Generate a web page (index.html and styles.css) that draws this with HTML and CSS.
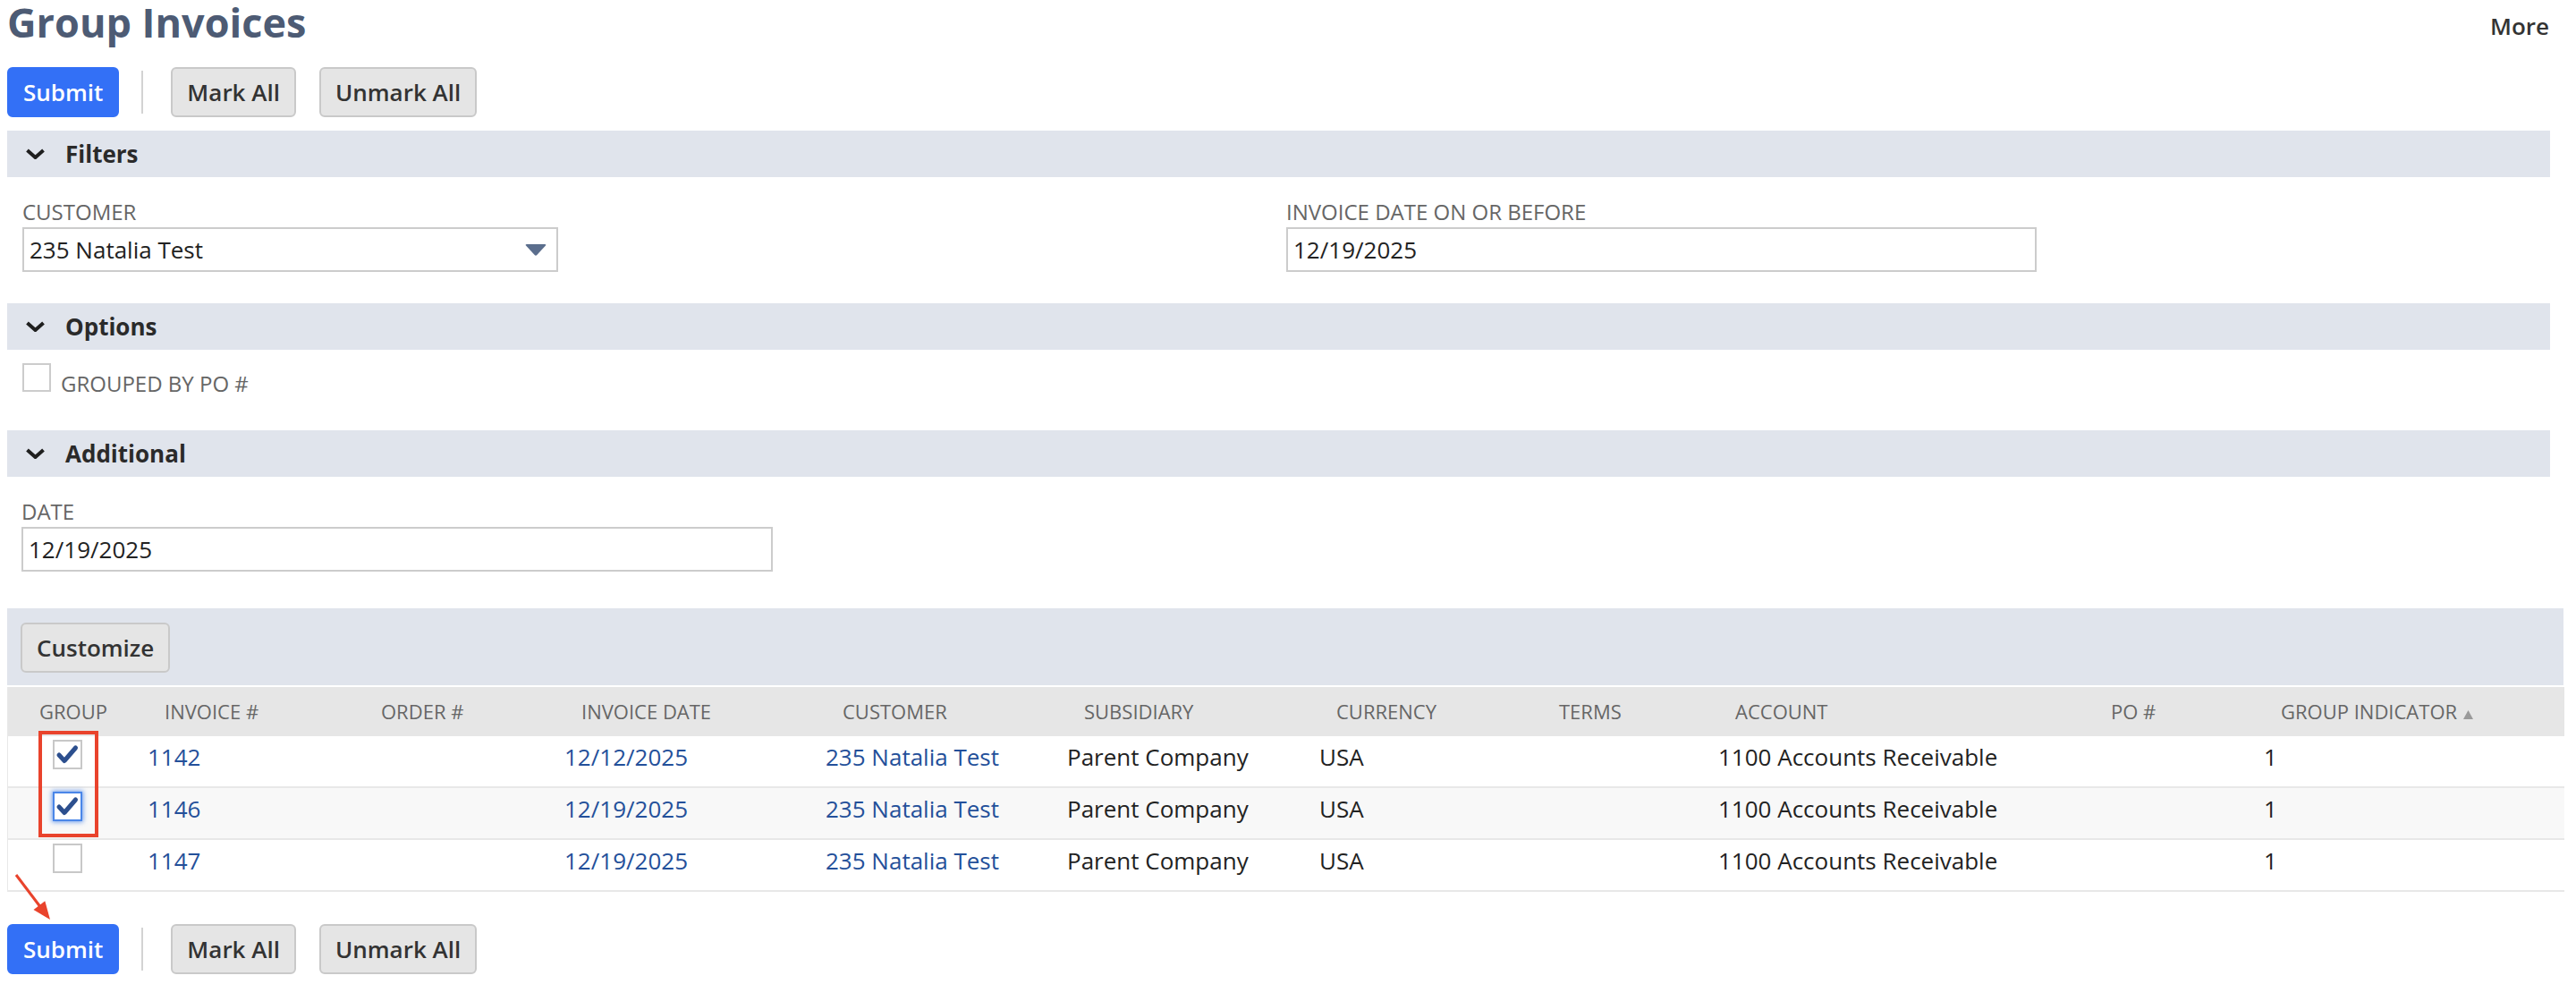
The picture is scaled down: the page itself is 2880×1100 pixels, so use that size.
FILE: index.html
```html
<!DOCTYPE html>
<html lang="en">
<head>
  <meta charset="UTF-8" />
  <meta name="viewport" content="width=device-width, initial-scale=1.0"/>
  <title>Group Invoices</title>
  <link rel="stylesheet" href="styles.css">
</head>
<body>
<div class="page">
  <header class="page-head">
    <h1 class="page-title">Group Invoices</h1>
    <a class="more">More</a>
  </header>

  <div class="btn-bar btn-bar-top">
    <button class="btn btn-primary">Submit</button>
    <span class="btn-sep"></span>
    <button class="btn">Mark All</button>
    <button class="btn">Unmark All</button>
  </div>

  <section class="fgroup">
    <div class="fgroup-head">
      <svg class="chev" width="23" height="12" viewBox="0 0 23 12"><path d="M2.5 2 L11.5 10 L20.5 2" fill="none" stroke="#1f1f1f" stroke-width="4"/></svg>
      Filters
    </div>
    <div class="fgroup-body cols-2">
      <div class="field">
        <label>Customer</label>
        <div class="input select">
          <span>235 Natalia Test</span>
          <svg width="24" height="13" viewBox="0 0 24 13"><path d="M2 0 H22 Q24 0 23 1.5 L13.3 12 Q12 13.3 10.7 12 L1 1.5 Q0 0 2 0 Z" fill="#5b6e8d"/></svg>
        </div>
      </div>
      <div class="field">
        <label>Invoice Date On or Before</label>
        <div class="input date-wide">12/19/2025</div>
      </div>
    </div>
  </section>

  <section class="fgroup">
    <div class="fgroup-head">
      <svg class="chev" width="23" height="12" viewBox="0 0 23 12"><path d="M2.5 2 L11.5 10 L20.5 2" fill="none" stroke="#1f1f1f" stroke-width="4"/></svg>
      Options
    </div>
    <div class="fgroup-body opts">
      <div class="check-row">
        <span class="cbox"></span>
        <span class="check-label">Grouped by PO #</span>
      </div>
    </div>
  </section>

  <section class="fgroup">
    <div class="fgroup-head">
      <svg class="chev" width="23" height="12" viewBox="0 0 23 12"><path d="M2.5 2 L11.5 10 L20.5 2" fill="none" stroke="#1f1f1f" stroke-width="4"/></svg>
      Additional
    </div>
    <div class="fgroup-body addl">
      <div class="field">
        <label>Date</label>
        <div class="input date-mid">12/19/2025</div>
      </div>
    </div>
  </section>

  <section class="list">
    <div class="list-bar">
      <button class="btn">Customize</button>
    </div>
    <div class="table-wrap">
      <table class="grid">
        <colgroup>
          <col style="width:144px"><col style="width:242px"><col style="width:224px"><col style="width:292px">
          <col style="width:270px"><col style="width:282px"><col style="width:249px"><col style="width:197px">
          <col style="width:420px"><col style="width:190px"><col style="width:348px">
        </colgroup>
        <thead>
          <tr>
            <th class="c-group">Group</th>
            <th>Invoice #</th>
            <th>Order #</th>
            <th>Invoice Date</th>
            <th>Customer</th>
            <th>Subsidiary</th>
            <th>Currency</th>
            <th>Terms</th>
            <th>Account</th>
            <th>PO #</th>
            <th>Group Indicator<svg class="sort" width="11" height="10" viewBox="0 0 11 10"><path d="M5.5 0 L11 10 H0 Z" fill="#9a9a9a"/></svg></th>
          </tr>
        </thead>
        <tbody>
          <tr>
            <td class="c-group"><span class="cbox cbox-lg"><svg width="29" height="29" viewBox="0 0 29 29"><path d="M5 15 L11 21.5 L23.5 7" fill="none" stroke="#2c4f8e" stroke-width="5" stroke-linejoin="round" stroke-linecap="round"/></svg></span></td>
            <td><a>1142</a></td>
            <td></td>
            <td><a>12/12/2025</a></td>
            <td><a>235 Natalia Test</a></td>
            <td>Parent Company</td>
            <td>USA</td>
            <td></td>
            <td>1100 Accounts Receivable</td>
            <td></td>
            <td>1</td>
          </tr>
          <tr class="alt">
            <td class="c-group"><span class="cbox cbox-lg focus"><svg width="29" height="29" viewBox="0 0 29 29"><path d="M5 15 L11 21.5 L23.5 7" fill="none" stroke="#2c4f8e" stroke-width="5" stroke-linejoin="round" stroke-linecap="round"/></svg></span></td>
            <td><a>1146</a></td>
            <td></td>
            <td><a>12/19/2025</a></td>
            <td><a>235 Natalia Test</a></td>
            <td>Parent Company</td>
            <td>USA</td>
            <td></td>
            <td>1100 Accounts Receivable</td>
            <td></td>
            <td>1</td>
          </tr>
          <tr>
            <td class="c-group"><span class="cbox cbox-lg"></span></td>
            <td><a>1147</a></td>
            <td></td>
            <td><a>12/19/2025</a></td>
            <td><a>235 Natalia Test</a></td>
            <td>Parent Company</td>
            <td>USA</td>
            <td></td>
            <td>1100 Accounts Receivable</td>
            <td></td>
            <td>1</td>
          </tr>
        </tbody>
      </table>
      <div class="mark-box"></div>
    </div>
  </section>

  <div class="btn-bar btn-bar-bottom">
    <svg class="pointer" width="60" height="60" viewBox="0 0 60 60">
      <line x1="10" y1="5" x2="38" y2="42" stroke="#e9432c" stroke-width="3"/>
      <path d="M48 55 L42.3 34.3 L29.5 43.9 Z" fill="#e9432c"/>
    </svg>
    <button class="btn btn-primary">Submit</button>
    <span class="btn-sep"></span>
    <button class="btn">Mark All</button>
    <button class="btn">Unmark All</button>
  </div>
</div>
</body>
</html>
```

FILE: styles.css
```css
body {
  margin: 0;
  background: #fff;
  color: #222;
  font-family: "Open Sans", sans-serif;
  font-size: 26px;
}

.page {
  padding: 0 14px 0 8px;
}

a {
  color: #24509a;
  text-decoration: none;
}

.page-head {
  display: flex;
  justify-content: space-between;
  align-items: flex-start;
  height: 50px;
}

.page-title {
  margin: 0;
  font-size: 45px;
  line-height: 50px;
  font-weight: 700;
  color: #4d5b74;
}

.more {
  color: #333;
  font-weight: 600;
  line-height: 36px;
  padding-top: 11px;
  margin-right: 16px;
}

/* buttons */

.btn-bar {
  display: flex;
  align-items: center;
  height: 56px;
}

.btn-bar-top {
  margin: 25px 0 15px;
}

.btn {
  box-sizing: border-box;
  height: 56px;
  padding: 0 16px;
  border: 2px solid #c9c9c9;
  border-radius: 6px;
  background: #e5e5e5;
  color: #333;
  font-family: "Open Sans", sans-serif;
  font-size: 26px;
  font-weight: 600;
  line-height: 52px;
}

.btn-primary {
  background: #3370f6;
  border-color: #3370f6;
  color: #fff;
}

.btn + .btn {
  margin-left: 26px;
}

.btn-sep {
  width: 2px;
  height: 48px;
  background: #d3d3d3;
  margin: 0 31px 0 25px;
}

.btn-bar-bottom {
  position: relative;
  margin-top: 36px;
}

.pointer {
  position: absolute;
  left: 0;
  top: -60px;
}

/* field groups */

.fgroup {
  margin-right: 15px;
}

.fgroup-head {
  display: flex;
  align-items: center;
  height: 52px;
  padding-left: 20px;
  background: #e0e4ec;
  color: #2a2a2a;
  font-weight: 700;
}

.chev {
  margin-right: 22px;
}

.fgroup-body {
  padding: 24px 17px 35px;
}

.cols-2 {
  display: grid;
  grid-template-columns: 1413px 1fr;
}

.field label {
  display: block;
  font-size: 24px;
  line-height: 30px;
  color: #666;
  text-transform: uppercase;
}

.input {
  box-sizing: border-box;
  height: 50px;
  margin-top: 2px;
  padding: 0 6px;
  border: 2px solid #ccc;
  line-height: 46px;
  color: #222;
}

.select {
  width: 599px;
  display: flex;
  justify-content: space-between;
  align-items: center;
  padding-right: 11px;
}

.date-wide {
  width: 839px;
}

.date-mid {
  width: 840px;
}

.opts {
  padding: 15px 17px 43px;
}

.addl {
  padding: 24px 16px 41px;
}

.check-row {
  display: flex;
  align-items: flex-end;
}

.cbox {
  box-sizing: border-box;
  display: block;
  width: 32px;
  height: 32px;
  border: 2px solid #ccc;
  background: #fff;
}

.check-label {
  margin-left: 11px;
  font-size: 24px;
  line-height: 19px;
  color: #666;
  text-transform: uppercase;
}

/* list */

.list-bar {
  padding: 16px 14px 14px 15px;
  background: #e0e4ec;
}

.table-wrap {
  position: relative;
  margin-top: 2px;
}

.grid {
  width: 2858px;
  table-layout: fixed;
  border-collapse: separate;
  border-spacing: 0;
  border-left: 1px solid #e8e8e8;
}

.grid th {
  height: 55px;
  padding: 0 0 0 31px;
  background: #e6e6e6;
  color: #666;
  font-size: 22px;
  font-weight: 400;
  line-height: 55px;
  text-align: left;
  text-transform: uppercase;
  white-space: nowrap;
}

.grid th.c-group {
  padding-left: 35px;
}

.sort {
  margin-left: 7px;
}

.grid td {
  padding: 5px 0 15px 12px;
  line-height: 36px;
  vertical-align: top;
  border-bottom: 2px solid #e8e8e8;
  white-space: nowrap;
}

.grid td.c-group {
  padding: 4px 0 0 50px;
}

.grid tr.alt td {
  background: #f8f8f8;
}

.cbox-lg {
  width: 33px;
  height: 33px;
  border-color: #c8c8c8;
}

.cbox-lg svg {
  display: block;
}

.cbox-lg.focus {
  border-color: #4a86e8;
  box-shadow: 0 0 5px 1px rgba(74, 134, 232, 0.8);
}

.mark-box {
  position: absolute;
  left: 35px;
  top: 49px;
  width: 67px;
  height: 119px;
  box-sizing: border-box;
  border: 4px solid #e9432c;
}
```
